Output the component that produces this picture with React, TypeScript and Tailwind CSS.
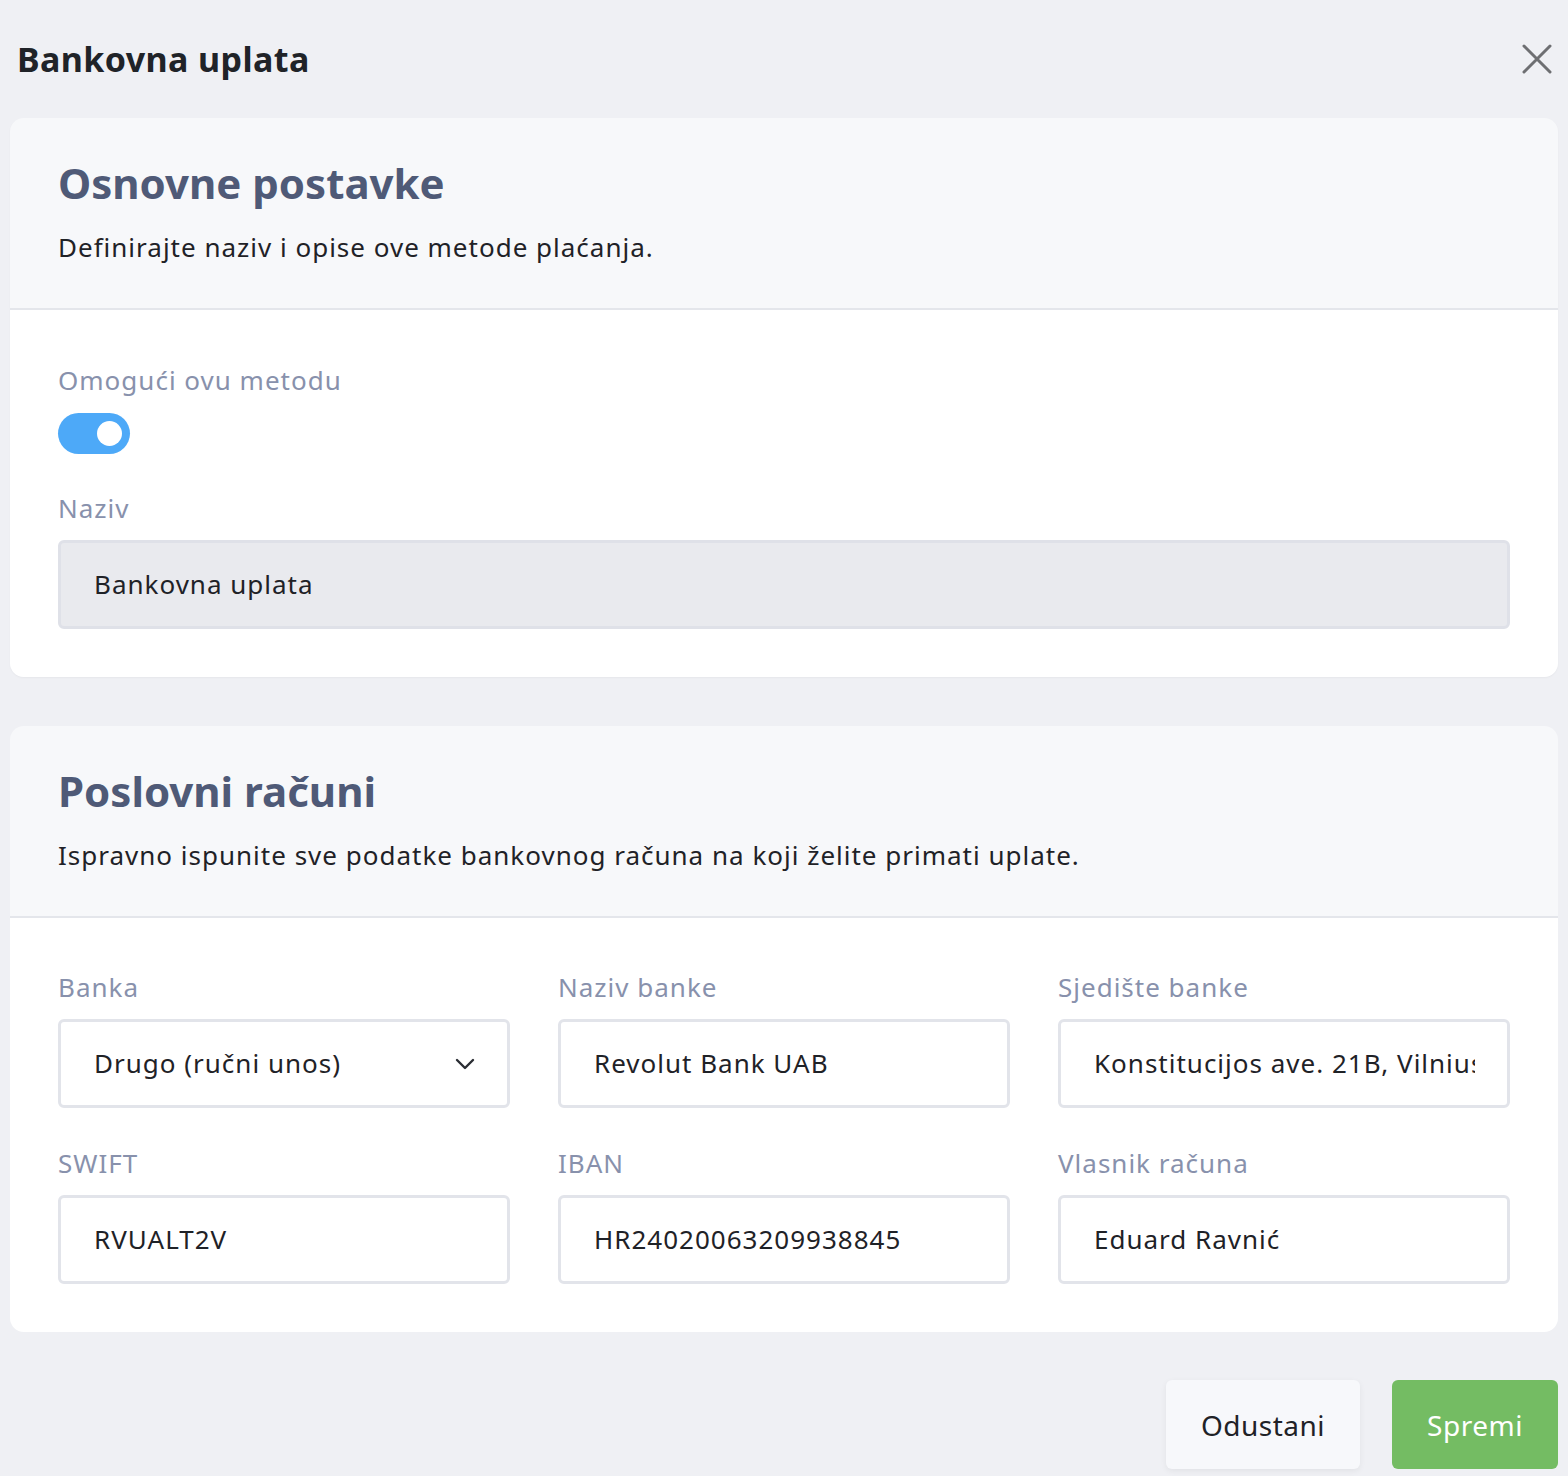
import React from 'react';

const font = { fontFamily: '"Noto Sans", "Open Sans", sans-serif' };

interface FieldProps {
  label: string;
  value: string;
  select?: boolean;
}

const Field: React.FC<FieldProps> = ({ label, value, select }) => (
  <div className="flex flex-col">
    <div className="text-[26px] leading-[36px] tracking-[1px] text-[#8891ac]">{label}</div>
    <div className="mt-[14px] flex h-[89px] items-center justify-between rounded-[6px] border-[3px] border-[#e2e4ea] bg-white pl-[33px] pr-[32px]">
      {select ? (
        <>
          <span className="whitespace-nowrap text-[26px] tracking-[1px] text-[#1f2227]">{value}</span>
          <svg width="20" height="12" viewBox="0 0 20 12" fill="none" className="ml-3 shrink-0">
            <path d="M2 2l8 8 8-8" stroke="#2a2d33" strokeWidth="2.4" strokeLinecap="round" strokeLinejoin="round" />
          </svg>
        </>
      ) : (
        <input
          readOnly
          value={value}
          className="w-full min-w-0 bg-transparent text-[26px] tracking-[1px] text-[#1f2227] outline-none"
          style={font}
        />
      )}
    </div>
  </div>
);

const SectionHeader: React.FC<{ title: string; text: string }> = ({ title, text }) => (
  <div className="rounded-t-[14px] border-b-2 border-[#e4e6eb] bg-[#f7f8fa] px-[48px] pt-[37px] pb-[43px]">
    <h2 className="text-[42px] font-bold leading-[56px] text-[#4f5a77]">{title}</h2>
    <p className="mt-[18px] text-[26px] leading-[36px] tracking-[1px] text-[#1f2227]">{text}</p>
  </div>
);

export default function App() {
  return (
    <div className="min-h-[1476px] w-full bg-[#eff0f4] px-[10px]" style={font}>
      <div className="flex items-center justify-between pl-[7px] pr-[6px] pt-[35px] pb-[35px]">
        <h1 className="text-[34px] font-bold leading-[48px] tracking-[0.4px] text-[#202328]">Bankovna uplata</h1>
        <svg width="30" height="30" viewBox="0 0 30 30" fill="none">
          <path d="M2 2l26 26M28 2L2 28" stroke="#6e6f72" strokeWidth="3" strokeLinecap="round" />
        </svg>
      </div>

      <div className="rounded-[14px] shadow-[0_1px_2px_rgba(0,0,0,0.04)]">
        <SectionHeader title="Osnovne postavke" text="Definirajte naziv i opise ove metode plaćanja." />
        <div className="rounded-b-[14px] bg-white px-[48px] pt-[52px] pb-[48px]">
          <div className="text-[26px] leading-[36px] tracking-[1px] text-[#8891ac]">Omogući ovu metodu</div>
          <div className="mt-[15px] flex h-[41px] w-[72px] items-center justify-end rounded-full bg-[#4da9f8] pr-[8px]">
            <div className="h-[25px] w-[25px] rounded-full bg-white" />
          </div>
          <div className="mt-[36px] text-[26px] leading-[36px] tracking-[1px] text-[#8891ac]">Naziv</div>
          <div className="mt-[14px] flex h-[89px] items-center rounded-[6px] border-[3px] border-[#dfe1e8] bg-[#e9eaee] pl-[33px]">
            <span className="text-[26px] tracking-[1px] text-[#1f2227]">Bankovna uplata</span>
          </div>
        </div>
      </div>

      <div className="mt-[49px] rounded-[14px]">
        <SectionHeader
          title="Poslovni računi"
          text="Ispravno ispunite sve podatke bankovnog računa na koji želite primati uplate."
        />
        <div className="rounded-b-[14px] bg-white px-[48px] pt-[51px] pb-[48px]">
          <div className="grid grid-cols-3 gap-x-[48px] gap-y-[37px]">
            <Field label="Banka" value="Drugo (ručni unos)" select />
            <Field label="Naziv banke" value="Revolut Bank UAB" />
            <Field label="Sjedište banke" value="Konstitucijos ave. 21B, Vilnius" />
            <Field label="SWIFT" value="RVUALT2V" />
            <Field label="IBAN" value="HR24020063209938845" />
            <Field label="Vlasnik računa" value="Eduard Ravnić" />
          </div>
        </div>
      </div>

      <div className="mt-[48px] flex justify-end gap-[32px]">
        <button className="h-[89px] w-[194px] rounded-[6px] bg-[#f7f8fb] text-[28px] tracking-[0.5px] text-[#1f2227] shadow-[0_2px_6px_rgba(0,0,0,0.06)]">
          Odustani
        </button>
        <button className="h-[89px] w-[166px] rounded-[6px] bg-[#74bc63] text-[28px] tracking-[0.5px] text-white">
          Spremi
        </button>
      </div>
    </div>
  );
}
